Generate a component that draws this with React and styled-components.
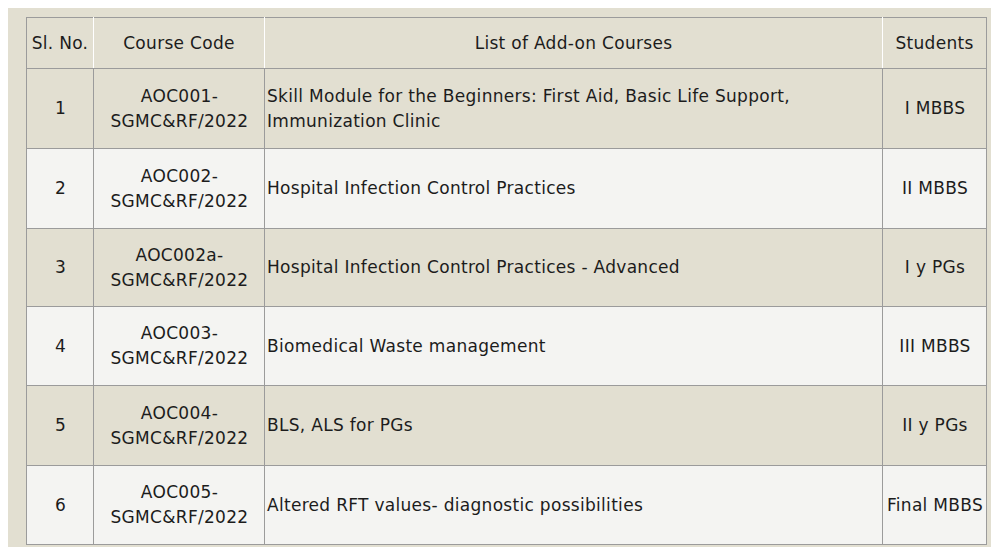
import React from 'react'
import styled, { createGlobalStyle } from 'styled-components'

const GlobalStyle = createGlobalStyle`
  body {
    margin: 8px;
    background: #ffffff;
    font-family: "DejaVu Sans", "Noto Sans", sans-serif;
  }
`

const Panel = styled.div`
  width: 989px;
  height: 539px;
  box-sizing: border-box;
  padding: 9px 12px 3px 18px;
  background: #e2dfd1;
`

const Table = styled.table`
  width: 960px;
  table-layout: fixed;
  border-collapse: collapse;
  border: 1px solid #9b9b9b;
  font-size: 17px;
  letter-spacing: 0.3px;
  line-height: 25px;
  color: #1c1c1c;
`

const HeadCell = styled.th`
  height: 50px;
  padding: 0 1px;
  font-weight: normal;
  text-align: center;
  white-space: nowrap;
  background: #e2dfd1;
  border-bottom: 1px solid #9b9b9b;
  border-left: 1px solid #ffffff;
  &:first-child {
    border-left: 1px solid #9b9b9b;
  }
`

const Row = styled.tr`
  background: ${(props) => (props.$shade ? '#e2dfd1' : '#f4f4f2')};
`

const Cell = styled.td`
  height: ${(props) => props.$h}px;
  padding: 0 1px 0 2px;
  text-align: ${(props) => (props.$left ? 'left' : 'center')};
  vertical-align: middle;
  white-space: nowrap;
  border: 1px solid #9b9b9b;
`

const courses = [
  { no: 1, code: ['AOC001-', 'SGMC&RF/2022'], title: ['Skill Module for the Beginners: First Aid, Basic Life Support,', 'Immunization Clinic'], students: 'I MBBS', h: 79 },
  { no: 2, code: ['AOC002-', 'SGMC&RF/2022'], title: ['Hospital Infection Control Practices'], students: 'II MBBS', h: 79 },
  { no: 3, code: ['AOC002a-', 'SGMC&RF/2022'], title: ['Hospital Infection Control Practices - Advanced'], students: 'I y PGs', h: 77 },
  { no: 4, code: ['AOC003-', 'SGMC&RF/2022'], title: ['Biomedical Waste management'], students: 'III MBBS', h: 78 },
  { no: 5, code: ['AOC004-', 'SGMC&RF/2022'], title: ['BLS, ALS for PGs'], students: 'II y PGs', h: 79 },
  { no: 6, code: ['AOC005-', 'SGMC&RF/2022'], title: ['Altered RFT values- diagnostic possibilities'], students: 'Final MBBS', h: 78 },
]

const Lines = ({ items }) =>
  items.map((line, i) => (
    <React.Fragment key={i}>
      {i > 0 && <br />}
      {line}
    </React.Fragment>
  ))

const App = () => {
  return (
    <>
      <GlobalStyle />
      <Panel>
        <Table>
          <colgroup>
            <col style={{ width: 67 }} />
            <col style={{ width: 171 }} />
            <col style={{ width: 618 }} />
            <col style={{ width: 104 }} />
          </colgroup>
          <thead>
            <tr>
              <HeadCell>Sl. No.</HeadCell>
              <HeadCell>Course Code</HeadCell>
              <HeadCell>List of Add-on Courses</HeadCell>
              <HeadCell>Students</HeadCell>
            </tr>
          </thead>
          <tbody>
            {courses.map((c, i) => (
              <Row key={c.no} $shade={i % 2 === 0}>
                <Cell $h={c.h}>{c.no}</Cell>
                <Cell $h={c.h}>
                  <Lines items={c.code} />
                </Cell>
                <Cell $h={c.h} $left>
                  <Lines items={c.title} />
                </Cell>
                <Cell $h={c.h}>{c.students}</Cell>
              </Row>
            ))}
          </tbody>
        </Table>
      </Panel>
    </>
  )
}

export default App
